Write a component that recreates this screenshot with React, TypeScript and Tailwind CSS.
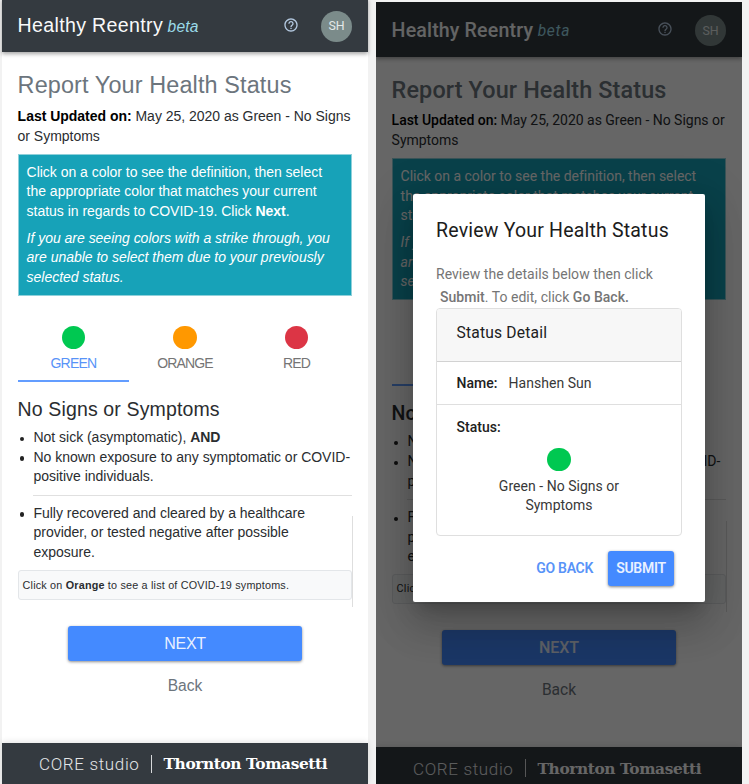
import type { ReactNode } from 'react';
import { MdHelpOutline } from 'react-icons/md';

type ScreenProps = { roboto?: boolean };

function Line({ children, className = '' }: { children: ReactNode; className?: string }) {
  return <span className={`block whitespace-nowrap ${className}`}>{children}</span>;
}

function Tab({ color, label, active, roboto }: { color: string; label: string; active?: boolean; roboto?: boolean }) {
  return (
    <div className={`flex h-[69px] flex-1 flex-col items-center border-b-2 pt-[12.5px] ${active ? 'border-[#639dff] text-[#5893f8]' : 'border-transparent text-[#757575]'}`}>
      <span className={`size-[23.4px] rounded-full ${color}`} />
      <span className={`mt-[4px] leading-[20px] ${roboto ? 'tracking-normal' : 'tracking-[-0.82px]'}`}>{label}</span>
    </div>
  );
}

function Bullet({ children }: { children: ReactNode }) {
  return (
    <li className="flex">
      <span className="mt-[8.5px] mr-[9px] ml-[2.5px] size-[4.4px] shrink-0 rounded-full bg-[#222]" />
      <div>{children}</div>
    </li>
  );
}

function Screen({ roboto }: ScreenProps) {
  return (
    <div
      className={`w-[366px] shrink-0 bg-white text-[14px] leading-[19.52px] text-[#2a2d30] ${
        roboto ? "font-['Roboto',sans-serif] tracking-[-0.02px]" : "font-['Liberation_Sans',Arial,sans-serif] tracking-[-0.02px]"
      }`}
    >
      <header className="relative flex h-[54.6px] items-center bg-[#343a40] pr-[16px] pl-[15.6px] shadow-[0_2px_4px_rgba(0,0,0,0.35)]">
        <h1 className={`mt-[2px] text-[19.6px] text-[#f8f9fa] ${roboto ? 'font-medium tracking-[0.15px]' : 'tracking-[0.33px]'}`}>Healthy Reentry</h1>
        <em className={`mt-[4px] ml-[4.5px] text-[15.6px] text-[#9bdbe9] ${roboto ? 'tracking-[0.7px]' : 'tracking-[0.2px]'}`}>beta</em>
        <MdHelpOutline className="mr-[22.5px] mb-px ml-auto size-[16px] text-[#b3c8df]" />
        <span className="mt-[2px] flex size-[31px] items-center justify-center rounded-full bg-[#7b8b8a] font-['Roboto',sans-serif] text-[12.4px] tracking-normal text-[#e3e8e8]">SH</span>
      </header>

      <main className="h-[690.4px] px-[15.6px] pt-[17.8px]">
        <h2
          className={`text-[23.42px] leading-[31.2px] whitespace-nowrap text-[#6c757d] ${
            roboto ? 'pt-[0.7px] font-medium tracking-[0.12px]' : 'pb-[0.7px] tracking-[0.13px]'
          }`}
        >
          Report Your Health Status
        </h2>
        <p className="mt-[5px]">
          <Line>
            <b className={roboto ? 'font-medium text-black' : 'text-black'}>Last Updated on:</b> May 25, 2020 as Green - No Signs{roboto ? ' or' : ''}
          </Line>
          <Line>{roboto ? 'Symptoms' : 'or Symptoms'}</Line>
        </p>

        <div className="mt-[8.1px] h-[141.4px] border border-[#8fd0da] bg-[#17a2b8] px-[8px] pt-[7.7px] text-white">
          <p>
            <Line>Click on a color to see the definition, then select</Line>
            <Line>the appropriate color that matches your current</Line>
            <Line>
              status in regards to COVID-19. Click <b>Next</b>.
            </Line>
          </p>
          <p className="mt-[7.5px] italic">
            <Line>If you are seeing colors with a strike through, you</Line>
            <Line>are unable to select them due to your previously</Line>
            <Line>selected status.</Line>
          </p>
        </div>

        <div className="mt-[17.5px] flex">
          <Tab color="bg-[#00c851]" label="GREEN" active roboto={roboto} />
          <Tab color="bg-[#ff9800]" label="ORANGE" roboto={roboto} />
          <Tab color="bg-[#dc3545]" label="RED" roboto={roboto} />
        </div>

        <h3 className={`mt-[14px] text-[19.52px] leading-[27px] ${roboto ? 'font-medium' : 'tracking-[0.13px]'}`}>No Signs or Symptoms</h3>
        <ul className="mt-[5.2px]">
          <Bullet>
            <Line>
              Not sick (asymptomatic), <b>AND</b>
            </Line>
          </Bullet>
          <Bullet>
            <Line>No known exposure to any symptomatic or COVID-</Line>
            <Line>positive individuals.</Line>
          </Bullet>
        </ul>
        <hr className="mt-[8px] ml-[15.6px] border-[#e0e0e0]" />
        <div className="-mr-px mt-[8px]">
          <ul>
            <Bullet>
              <Line>Fully recovered and cleared by a healthcare</Line>
              <Line>provider, or tested negative after possible</Line>
              <Line>exposure.</Line>
            </Bullet>
          </ul>
          <div className="-mt-[46px] h-[91px] border-r border-[#dedede] pt-[53.9px]">
            <div className={`h-[29.5px] rounded-[3px] border border-[#e3e6e9] bg-[#f8f9fa] pl-[4px] text-[10.8px] leading-[28px] whitespace-nowrap ${roboto ? 'tracking-[0.2px]' : 'tracking-[0.19px]'}`}>
              Click on <b>Orange</b> to see a list of COVID-19 symptoms.
            </div>
          </div>
        </div>

        <div className={`mx-auto mt-[18.6px] flex h-[35px] w-[234px] items-center justify-center rounded-[3px] bg-[#448aff] text-[16px] text-[#e9f1ff] shadow-[0_1px_3px_rgba(0,0,0,0.45)] ${roboto ? 'font-medium tracking-normal' : 'tracking-[-0.3px]'}`}>
          NEXT
        </div>
        <div className={`text-center text-[15.6px] text-[#6c757d] ${roboto ? 'mt-[16px]' : 'mt-[15px]'}`}>Back</div>
      </main>

      <footer className="flex h-[41px] items-center bg-[#343a40] pl-[37px] whitespace-nowrap text-white shadow-[0_-1px_6px_rgba(0,0,0,0.12)]">
        <span className="mt-[4px] font-['Roboto',sans-serif] text-[17px] font-light tracking-[0.65px] text-[#e4e6e8]">CORE studio</span>
        <span className="mt-[2px] ml-[11px] h-[18px] w-px bg-[#d6d8da]" />
        <span className="mt-[4px] ml-[12px] font-['DejaVu_Serif',serif] text-[15.4px] font-bold tracking-[-0.4px]">Thornton Tomasetti</span>
      </footer>
    </div>
  );
}

function ReviewDialog() {
  return (
    <div className="absolute top-[192px] left-[37px] h-[408px] w-[292px] rounded-[2px] bg-white px-[23px] font-['Roboto',sans-serif] text-[14px] leading-[19.52px] tracking-[0.03px] text-[#383838] shadow-[0_11px_15px_-7px_rgba(0,0,0,0.2),0_24px_38px_3px_rgba(0,0,0,0.14),0_9px_46px_8px_rgba(0,0,0,0.12)]">
      <h2 className="pt-[21px] text-[19.52px] leading-[31px] font-[450] tracking-[0.19px] whitespace-nowrap text-[#1c1c1c]">Review Your Health Status</h2>
      <p className="mt-[17px] leading-[23px] text-[#757575]">
        <Line>Review the details below then click</Line>
        <Line className="pl-[4px]">
          <b className="font-medium">Submit</b>. To edit, click <b className="font-medium">Go Back.</b>
        </Line>
      </p>
      <section className="-mt-[1px] h-[228px] w-[246px] rounded-[4px] border border-[#dfdfdf]">
        <h3 className="h-[53px] rounded-t-[3px] border-b border-[#d2d2d2] bg-[#f7f7f7] pl-[19.5px] text-[15.6px] leading-[48px] font-[450] tracking-[0.2px] text-[#202020]">Status Detail</h3>
        <div className="h-[43px] border-b border-[#dfdfdf] pl-[19.5px] leading-[43px]">
          <b className="mr-[11px] font-medium text-[#212121]">Name:</b>Hanshen Sun
        </div>
        <div className="pt-[12.5px] pl-[19.5px] font-medium text-[#212121]">Status:</div>
        <div className="mt-[10.5px] flex flex-col items-center text-center">
          <span className="mb-[6px] size-[23.4px] rounded-full bg-[#00c851]" />
          <Line>Green - No Signs or</Line>
          <Line>Symptoms</Line>
        </div>
      </section>
      <div className="mt-[15px] flex items-center justify-end pr-[8px] font-semibold tracking-[-0.3px]">
        <span className="mt-px mr-[15px] text-[#5893f8]">GO BACK</span>
        <span className="flex h-[35px] w-[66px] items-center justify-center rounded-[3px] bg-[#448aff] pt-px text-[#e9f1ff] shadow-[0_1px_3px_rgba(0,0,0,0.5)]">SUBMIT</span>
      </div>
    </div>
  );
}

export default function App() {
  return (
    <div className="flex h-[784px] w-[749px] items-start overflow-hidden bg-[#f2f2f2] pl-[2px]">
      <div className="mt-[-2.3px] h-[787px] w-[366px] shrink-0">
        <Screen />
      </div>
      <div className="relative mt-[2px] ml-[8px] h-[782px] w-[366px] shrink-0 overflow-hidden">
        <Screen roboto />
        <div className="absolute inset-0 bg-black/60" />
        <ReviewDialog />
      </div>
    </div>
  );
}
